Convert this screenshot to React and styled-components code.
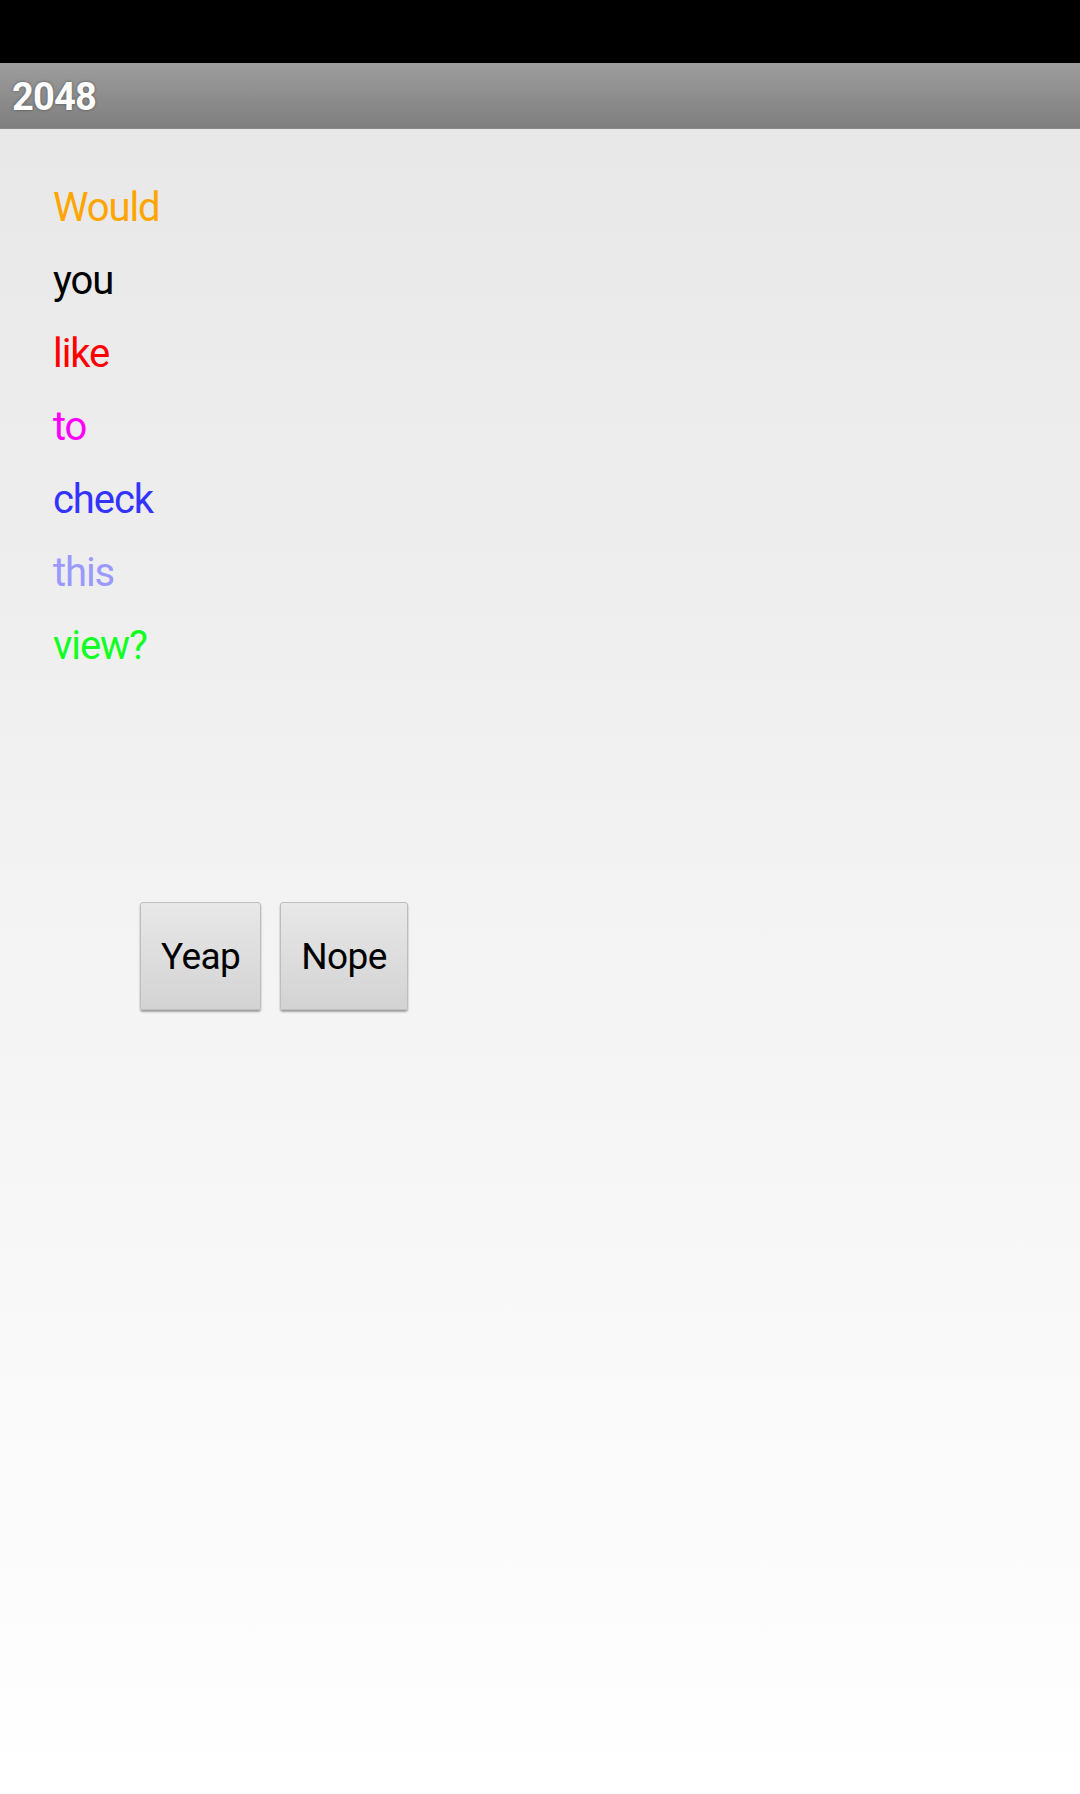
import React from "react";
import styled, { createGlobalStyle } from "styled-components";

const GlobalStyle = createGlobalStyle`
    html, body {
        margin: 0;
        padding: 0;
        background: #ffffff;
    }
    body {
        font-family: Roboto, "Noto Sans", "Liberation Sans", sans-serif;
    }
`;

const Screen = styled.div`
    width: 1080px;
    height: 1794px;
    display: flex;
    flex-direction: column;
    overflow: hidden;
`;

const StatusBar = styled.div`
    height: 63px;
    background: #000000;
    flex-shrink: 0;
`;

const TitleBar = styled.header`
    height: 66px;
    flex-shrink: 0;
    display: flex;
    align-items: center;
    padding-left: 12px;
    background: linear-gradient(to bottom, #9d9d9d, #7f7f7f);
    border-bottom: 1px solid #8a8a8a;
    box-sizing: border-box;
`;

const Title = styled.h1`
    margin: 0;
    font-size: 38px;
    font-weight: 700;
    letter-spacing: -0.8px;
    color: #ffffff;
    text-shadow: 0 0 3px rgba(0, 0, 0, 0.45);
    padding-top: 2px;
`;

const Body = styled.main`
    flex: 1;
    background: linear-gradient(to bottom, #e8e8e8, #ffffff);
    padding: 42px 0 0 53px;
`;

const WordList = styled.div`
    display: flex;
    flex-direction: column;
`;

const Word = styled.div`
    font-size: 40px;
    line-height: 73px;
    letter-spacing: -1.1px;
    color: ${props => props.color};
`;

const ButtonRow = styled.div`
    display: flex;
    gap: 19px;
    margin: 220px 0 0 87px;
`;

const Button = styled.button`
    height: 108px;
    padding: 0 ${props => props.pad}px;
    font-family: Roboto, "Noto Sans", "Liberation Sans", sans-serif;
    font-size: 37px;
    letter-spacing: -0.6px;
    color: #000000;
    background: linear-gradient(to bottom, #e8e8e8, #d3d3d3);
    border: 1px solid #bdbdbd;
    border-radius: 3px;
    box-shadow: 0 2px 2px rgba(0, 0, 0, 0.35);
`;

const words = [
    { text: "Would", color: "#ffa500" },
    { text: "you", color: "#000000" },
    { text: "like", color: "#ff0000" },
    { text: "to", color: "#ff00ff" },
    { text: "check", color: "#3333ff" },
    { text: "this", color: "#9999ff" },
    { text: "view?", color: "#11ff22" },
];

export default function App() {
    return (
        <Screen>
            <GlobalStyle />
            <StatusBar />
            <TitleBar>
                <Title>2048</Title>
            </TitleBar>
            <Body>
                <WordList>
                    {words.map(w => (
                        <Word key={w.text} color={w.color}>{w.text}</Word>
                    ))}
                </WordList>
                <ButtonRow>
                    <Button pad={20}>Yeap</Button>
                    <Button pad={20}>Nope</Button>
                </ButtonRow>
            </Body>
        </Screen>
    );
}
